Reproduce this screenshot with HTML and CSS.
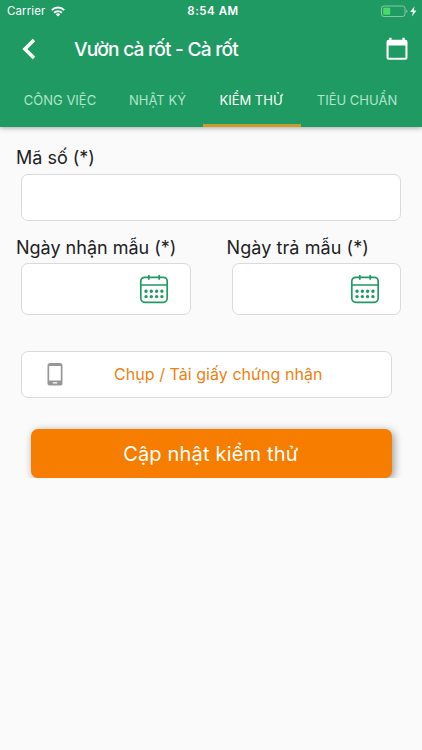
FILE: index.html
```
<!DOCTYPE html>
<html lang="vi">
<head>
    <meta charset="UTF-8">
    <meta name="viewport" content="width=device-width, initial-scale=1.0">
    <title>Vườn cà rốt - Cà rốt</title>
    <link rel="stylesheet" href="styles.css">
</head>
<body>

    <header>
        <div class="status-bar">
            <div class="carrier">
                <span>Carrier</span>
                <svg width="14" height="11" viewBox="0 0 14 11" fill="none" stroke="#fff" stroke-width="2">
                    <path d="M0.8 4.1a8.8 8.8 0 0 1 12.4 0"/>
                    <path d="M3.1 6.8a5.5 5.5 0 0 1 7.8 0"/>
                    <path d="M7 10.6L4.8 8.4a3.1 3.1 0 0 1 4.4 0z" fill="#fff" stroke="none"/>
                </svg>
            </div>
            <div class="time">8:54 AM</div>
            <div class="battery">
                <svg width="37" height="13" viewBox="0 0 37 13">
                    <rect x="0.5" y="1" width="23.5" height="10.5" rx="2.5" fill="none" stroke="#fff" stroke-opacity="0.45"/>
                    <rect x="2.2" y="2.7" width="7" height="7.1" rx="0.8" fill="#4cd964"/>
                    <path d="M25.3 4.5c1.6.5 1.6 3 0 3.5z" fill="#fff" fill-opacity="0.5"/>
                    <path d="M33.6 1.2L29.2 7h2.7l-.9 4.4L35.4 5.4h-2.8z" fill="#fff"/>
                </svg>
            </div>
        </div>

        <div class="toolbar">
            <svg class="back" width="14" height="22" viewBox="0 0 14 22">
                <path d="M12 2L2.9 11l9.1 9" fill="none" stroke="#fff" stroke-width="3.5"/>
            </svg>
            <h1>Vườn cà rốt - Cà rốt</h1>
            <svg class="today" width="22" height="24" viewBox="0 0 22 24">
                <path fill="#fff" fill-rule="evenodd" d="M3.2 .7h2.4v2h10.8v-2h2.4v2h.5a2.2 2.2 0 0 1 2.2 2.2v15.6a2.2 2.2 0 0 1-2.2 2.2H2.7a2.2 2.2 0 0 1-2.2-2.2V4.9a2.2 2.2 0 0 1 2.2-2.2h.5zM2.6 8.4v12.3h16.8V8.4z"/>
            </svg>
        </div>

        <nav class="tabs">
            <a href="#">CÔNG VIỆC</a>
            <a href="#">NHẬT KÝ</a>
            <a href="#" class="active">KIỂM THỬ</a>
            <a href="#">TIÊU CHUẨN</a>
        </nav>
    </header>

    <form class="container">
        <label for="code">Mã số (*)</label>
        <input type="text" id="code">

        <div class="dates">
            <div class="field">
                <label>Ngày nhận mẫu (*)</label>
                <div class="date-box">
                    <svg width="30" height="30" viewBox="0 0 30 30" fill="none" stroke="#1f9a62" stroke-width="1.7">
                        <rect x="1.8" y="3.3" width="26.4" height="25" rx="4"/>
                        <path d="M2 11h26M9.8 1v4.8M20.2 1v4.8"/>
                        <path class="dots" d="M7 17.2h.01M12.3 17.2h.01M17.6 17.2h.01M22.9 17.2h.01M7 22.6h.01M12.3 22.6h.01M17.6 22.6h.01M22.9 22.6h.01"/>
                    </svg>
                </div>
            </div>
            <div class="field">
                <label class="label-return">Ngày trả mẫu (*)</label>
                <div class="date-box">
                    <svg width="30" height="30" viewBox="0 0 30 30" fill="none" stroke="#1f9a62" stroke-width="1.7">
                        <rect x="1.8" y="3.3" width="26.4" height="25" rx="4"/>
                        <path d="M2 11h26M9.8 1v4.8M20.2 1v4.8"/>
                        <path class="dots" d="M7 17.2h.01M12.3 17.2h.01M17.6 17.2h.01M22.9 17.2h.01M7 22.6h.01M12.3 22.6h.01M17.6 22.6h.01M22.9 22.6h.01"/>
                    </svg>
                </div>
            </div>
        </div>

        <div class="upload">
            <svg width="16" height="24" viewBox="0 0 16 24">
                <path fill="#979797" fill-rule="evenodd" d="M3.2 1h9.6A2.7 2.7 0 0 1 15.5 3.7v17.2a2.7 2.7 0 0 1-2.7 2.7H3.2A2.7 2.7 0 0 1 .5 20.9V3.7A2.7 2.7 0 0 1 3.2 1zM2.2 4.1v14.3h11.6V4.1zM5.8 20.3v1.2h4.4v-1.2z"/>
            </svg>
            <span>Chụp / Tải giấy chứng nhận</span>
        </div>

        <div class="submit-wrap">
            <button type="button">Cập nhật kiểm thử</button>
        </div>
    </form>

</body>
</html>
```
FILE: styles.css
```
* {
    margin: 0;
    padding: 0;
    box-sizing: border-box;
}

body {
    font-family: Inter, "Liberation Sans", sans-serif;
    background-color: #fafafa;
    color: #222;
    min-height: 750px;
}

svg {
    display: block;
    flex: none;
}

header {
    height: 126.5px;
    background-color: #1f9a62;
    color: #fff;
    box-shadow: 0 1px 5px rgba(0, 0, 0, 0.35);
}

.status-bar {
    display: grid;
    grid-template-columns: 1fr auto 1fr;
    align-items: center;
    height: 22px;
    padding: 0 4px 0 7px;
    font-size: 11.5px;
}

.carrier {
    display: flex;
    align-items: center;
    gap: 6px;
    letter-spacing: 0.1px;
}

.time {
    padding-left: 1px;
    font-weight: 600;
    letter-spacing: 0.5px;
}

.battery {
    justify-self: end;
}

.toolbar {
    display: flex;
    align-items: center;
    height: 54px;
    padding: 0 14px 0 22px;
}

h1 {
    flex: 1;
    margin-left: 38px;
    font-size: 19.2px;
    font-weight: 500;
    letter-spacing: -0.8px;
    white-space: nowrap;
}

.tabs {
    display: grid;
    grid-template-columns: 105px 90px 98px 113px;
    height: 50.5px;
    padding-left: 8px;
}

.tabs a {
    display: flex;
    align-items: center;
    justify-content: center;
    padding-top: 1px;
    padding-right: 1px;
    border-bottom: 3px solid transparent;
    color: #b0e6ca;
    font-size: 13px;
    text-decoration: none;
    white-space: nowrap;
}

.tabs a.active {
    padding-right: 2px;
    color: #fff;
    border-bottom-color: #c99a2c;
}

.container {
    padding: 19px 21px 0;
}

label {
    display: block;
    height: 24px;
    margin-left: -5px;
    font-size: 18px;
    line-height: 24px;
    white-space: nowrap;
}

.dates label {
    line-height: 26px;
}

.label-return {
    letter-spacing: 0.08px;
}

input,
.date-box,
.upload {
    background-color: #fff;
    border: 1.5px solid #dadada;
    border-radius: 7px;
}

input {
    display: block;
    width: 380px;
    height: 47px;
    margin-top: 4px;
}

.dates {
    display: grid;
    grid-template-columns: 169.5px 169.5px;
    gap: 41px;
    margin-top: 14.5px;
}

.date-box {
    display: flex;
    align-items: center;
    justify-content: flex-end;
    height: 52px;
    margin-top: 4px;
    padding-right: 20.5px;
}

.dots {
    stroke-width: 3.4;
    stroke-linecap: round;
}

.upload {
    display: flex;
    align-items: center;
    width: 371px;
    height: 47.5px;
    margin-top: 35.5px;
    padding-left: 25px;
    color: #ee7f13;
    font-size: 16px;
}

.upload span {
    margin-left: 51px;
    letter-spacing: 0.05px;
    white-space: nowrap;
}

/* the shadow is cut off under the button */
.submit-wrap {
    margin: 20.5px -10px 0;
    padding: 10px 20px 0;
    overflow: hidden;
}

button {
    display: block;
    width: 360.5px;
    height: 49px;
    padding: 1px 1px 0 0;
    border: none;
    border-radius: 7px;
    background-color: #f77d00;
    box-shadow: 2px 2px 8px rgba(0, 0, 0, 0.4);
    color: #fff;
    font-family: inherit;
    font-size: 20px;
    letter-spacing: 0.18px;
}
```
